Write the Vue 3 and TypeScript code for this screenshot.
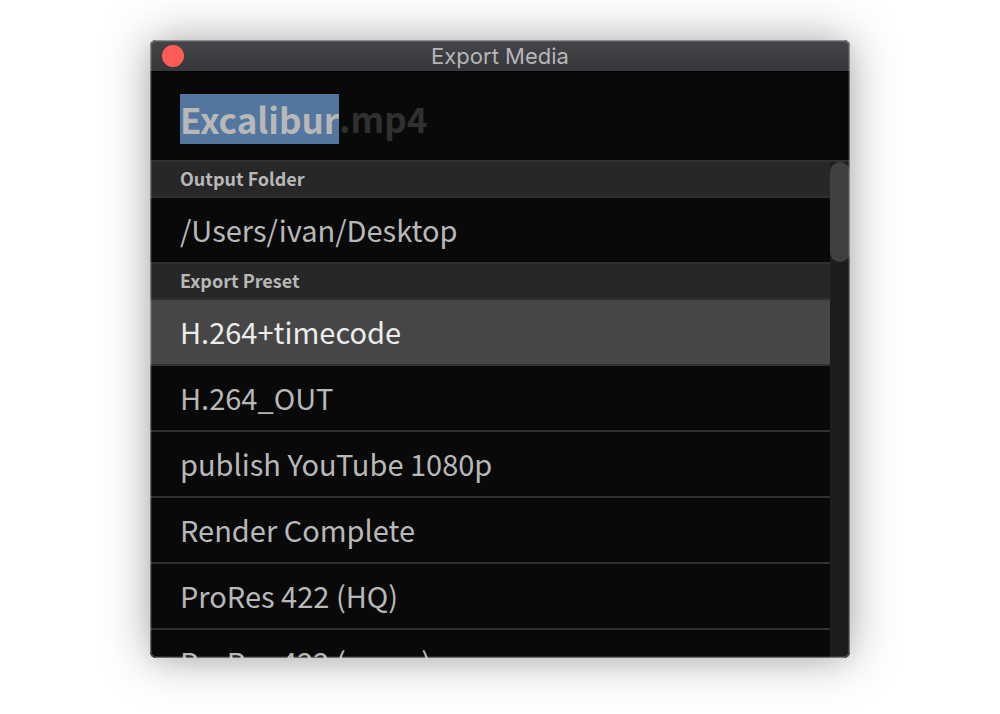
<script setup lang="ts">
import { ref } from 'vue'

const fileName = ref<string>('Excalibur')
const folder = ref<string>('/Users/ivan/Desktop')
const presets: string[] = [
  'H.264+timecode',
  'H.264_OUT',
  'publish YouTube 1080p',
  'Render Complete',
  'ProRes 422 (HQ)',
  'ProRes 422 (proxy)',
]
const selected = ref<string>(presets[0])
</script>

<template>
  <div class="desktop">
    <main class="window">
      <header class="titlebar">
        <button class="close" type="button" aria-label="Close"></button>
        <h1 class="title">Export Media</h1>
      </header>
      <div class="filename">
        <input v-model="fileName" class="name" type="text" size="8" aria-label="File name" spellcheck="false" />
        <span class="extension">.mp4</span>
      </div>
      <div class="body">
        <div class="list">
          <h2 class="section">Output Folder</h2>
          <button class="row" type="button">{{ folder }}</button>
          <h2 class="section">Export Preset</h2>
          <button
            v-for="preset in presets"
            :key="preset"
            class="row"
            :class="{ active: preset === selected }"
            type="button"
            :aria-pressed="preset === selected"
            @click="selected = preset"
          >{{ preset }}</button>
        </div>
        <div class="track"><div class="thumb"></div></div>
      </div>
    </main>
  </div>
</template>

<style>
body {
  margin: 0;
  background: #fff;
}
</style>

<style scoped>
.desktop {
  box-sizing: border-box;
  height: 100vh;
  padding: 40px 15% 56px;
  overflow: hidden;
  font-family: "Noto Sans CJK SC", "Noto Sans", sans-serif;
}
.window {
  position: relative;
  display: flex;
  flex-direction: column;
  height: 100%;
  overflow: hidden;
  border-radius: 6px;
  background: #090909;
  color: #b8b8b8;
  box-shadow: 0 0 48px rgba(0, 0, 0, 0.34), 0 4px 20px rgba(0, 0, 0, 0.06);
}
.window::after {
  content: "";
  position: absolute;
  inset: 0;
  border: 1px solid rgba(255, 255, 255, 0.4);
  border-radius: 6px;
  box-shadow: inset 0 0 0 1px rgba(255, 255, 255, 0.12);
  pointer-events: none;
}
.titlebar {
  display: grid;
  grid-template-columns: 22px 1fr 22px;
  align-items: center;
  flex: none;
  box-sizing: border-box;
  height: 32px;
  padding: 1px 12px 0;
  border-bottom: 1px solid #000;
  background: linear-gradient(#434548, #363739);
}
.close {
  width: 22px;
  height: 22px;
  padding: 0;
  border: 0;
  border-radius: 50%;
  background: #ff5c57;
}
.title {
  margin: 0;
  color: #b5b6b8;
  font: 400 22px/30px Inter, Roboto, sans-serif;
  text-align: center;
}
.filename {
  display: flex;
  align-items: center;
  flex: none;
  box-sizing: border-box;
  height: 90px;
  padding: 6px 30px 0;
  border-bottom: 2px solid #303030;
  font-size: 35px;
  font-weight: 700;
  line-height: 48px;
}
.name {
  field-sizing: content;
  box-sizing: border-box;
  height: 50px;
  padding: 0 0 2px;
  border: 0;
  outline: 0;
  background: #52769e;
  color: #b8b8b8;
  font: inherit;
}
.extension {
  padding-bottom: 2px;
  color: #303030;
}
.body {
  display: flex;
  flex: 1;
  min-height: 0;
}
.list {
  flex: 1;
  min-width: 0;
  overflow: hidden;
}
.section {
  margin: 0;
  padding: 0 30px 2px;
  border-bottom: 2px solid #303030;
  background: #272727;
  font-size: 18px;
  font-weight: 700;
  line-height: 32px;
}
.row {
  display: block;
  width: 100%;
  padding: 0 30px 2px;
  border: 0;
  border-bottom: 2px solid #303030;
  background: #090909;
  color: #b8b8b8;
  font: inherit;
  font-size: 29px;
  line-height: 62px;
  text-align: left;
  white-space: nowrap;
}
.row.active {
  background: #464646;
  color: #ececec;
}
.track {
  flex: none;
  width: 20px;
  background: #1d1d1d;
}
.thumb {
  height: 100px;
  border-radius: 10px;
  background: #404040;
}
</style>
